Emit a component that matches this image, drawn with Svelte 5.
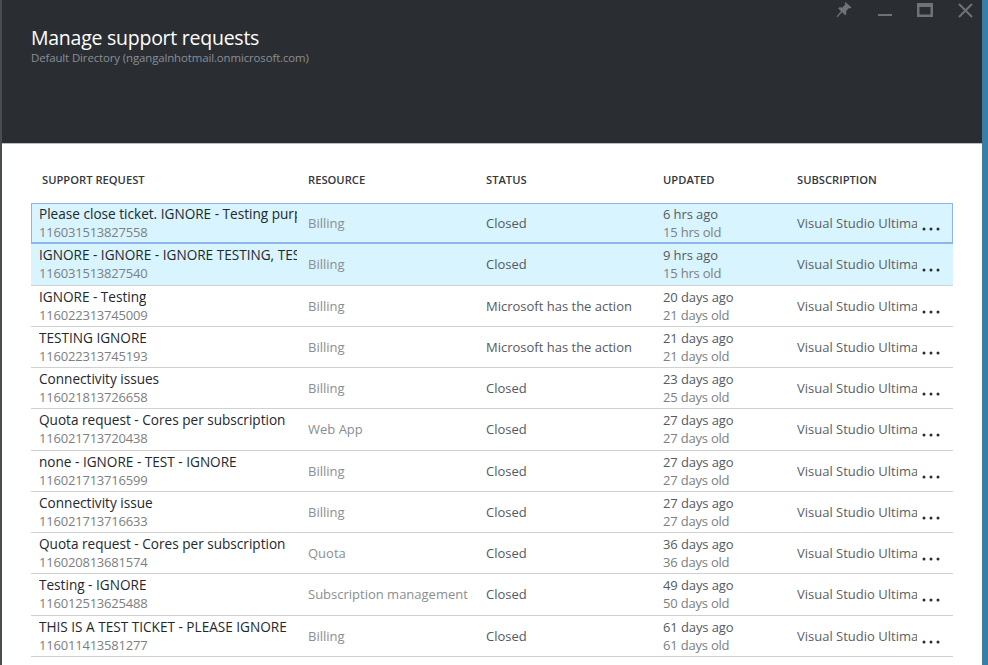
<script>
  const rows = [
    { title: 'Please close ticket. IGNORE - Testing purposes', id: '116031513827558', resource: 'Billing', status: 'Closed', updated: '6 hrs ago', age: '15 hrs old', state: 'focused' },
    { title: 'IGNORE - IGNORE - IGNORE TESTING, TESTING', id: '116031513827540', resource: 'Billing', status: 'Closed', updated: '9 hrs ago', age: '15 hrs old', state: 'selected' },
    { title: 'IGNORE - Testing', id: '116022313745009', resource: 'Billing', status: 'Microsoft has the action', updated: '20 days ago', age: '21 days old' },
    { title: 'TESTING IGNORE', id: '116022313745193', resource: 'Billing', status: 'Microsoft has the action', updated: '21 days ago', age: '21 days old' },
    { title: 'Connectivity issues', id: '116021813726658', resource: 'Billing', status: 'Closed', updated: '23 days ago', age: '25 days old' },
    { title: 'Quota request - Cores per subscription', id: '116021713720438', resource: 'Web App', status: 'Closed', updated: '27 days ago', age: '27 days old' },
    { title: 'none - IGNORE - TEST - IGNORE', id: '116021713716599', resource: 'Billing', status: 'Closed', updated: '27 days ago', age: '27 days old' },
    { title: 'Connectivity issue', id: '116021713716633', resource: 'Billing', status: 'Closed', updated: '27 days ago', age: '27 days old' },
    { title: 'Quota request - Cores per subscription', id: '116020813681574', resource: 'Quota', status: 'Closed', updated: '36 days ago', age: '36 days old' },
    { title: 'Testing - IGNORE', id: '116012513625488', resource: 'Subscription management', status: 'Closed', updated: '49 days ago', age: '50 days old' },
    { title: 'THIS IS A TEST TICKET - PLEASE IGNORE', id: '116011413581277', resource: 'Billing', status: 'Closed', updated: '61 days ago', age: '61 days old' }
  ];
</script>

<div class="blade">
  <header class="top">
    <div class="heading">
      <h1>Manage support requests</h1>
      <p>Default Directory (ngangalnhotmail.onmicrosoft.com)</p>
    </div>
    <div class="controls">
      <svg width="18" height="18" viewBox="0 0 18 18"><path d="M10.500 1l6 5.500-1.400.9-1-.5-3 3.200.3 3-1.300 1.200-3-3-4.600 5-1-.8 4.500-5.200-2.800-2.900 1.200-1.200 3 .2 3-3.200-.6-1.200z" fill="#6d7378"/></svg>
      <svg width="14" height="14" viewBox="0 0 14 14"><rect x="0" y="11" width="14" height="2" fill="#6d7378"/></svg>
      <svg width="16" height="14" viewBox="0 0 16 14"><path d="M0 0h16v14H0zM2.500 4v7.500h11V4z" fill="#6d7378" fill-rule="evenodd"/></svg>
      <svg width="15" height="15" viewBox="0 0 15 15"><path d="M1 1l13 13M14 1L1 14" stroke="#6d7378" stroke-width="2" fill="none"/></svg>
    </div>
  </header>

  <main class="content">
    <div class="row head">
      <span class="first">SUPPORT REQUEST</span>
      <span>RESOURCE</span>
      <span>STATUS</span>
      <span>UPDATED</span>
      <span>SUBSCRIPTION</span>
    </div>

    {#each rows as r}
      <div class="row item {r.state ?? ''}">
        <div class="cell two">
          <span class="title">{r.title}</span>
          <span class="sub">{r.id}</span>
        </div>
        <div class="cell muted">{r.resource}</div>
        <div class="cell status">{r.status}</div>
        <div class="cell two">
          <span class="upd">{r.updated}</span>
          <span class="sub">{r.age}</span>
        </div>
        <div class="cell plan">
          <span class="clip">Visual Studio Ultimate</span>
          <svg class="more" width="18" height="4" viewBox="0 0 18 4">
            <circle cx="2" cy="2" r="1.500" />
            <circle cx="9" cy="2" r="1.500" />
            <circle cx="16" cy="2" r="1.500" />
          </svg>
        </div>
      </div>
    {/each}
  </main>
</div>

<style>
  :global(body) {
    background: #fff;
    overflow: hidden;
  }

  .blade {
    width: 988px;
    height: 665px;
    box-sizing: border-box;
    border-left: 2px solid #4a4d50;
    border-right: 6px solid #3a7ea6;
    overflow: hidden;
    font-family: 'Open Sans', 'Noto Sans', sans-serif;
    background: #fff;
  }

  .top {
    height: 144px;
    background: #2a2e33;
    border-bottom: 1px solid #b9bbbd;
    box-sizing: border-box;
    display: flex;
    justify-content: space-between;
    align-items: flex-start;
    padding: 26px 9px 0 29px;
  }

  h1 {
    margin: 0;
    font-size: 19.5px;
    font-weight: 400;
    line-height: 24px;
    color: #fff;
    letter-spacing: -0.25px;
  }

  .heading p {
    margin: 1px 0 0;
    font-size: 11.4px;
    line-height: 14px;
    color: #8a8f93;
    letter-spacing: -0.1px;
  }

  .controls {
    display: flex;
    align-items: center;
    gap: 25px;
    margin-top: -25px;
  }

  .content {
    padding: 26px 27px 0 29px;
  }

  .row {
    display: grid;
    grid-template-columns: 277px 178px 177px 134px 1fr;
    width: 922px;
    box-sizing: border-box;
  }

  .head {
    height: 33px;
    font-size: 11.2px;
    font-weight: 600;
    color: #32383e;
    line-height: 18px;
  }

  .head .first {
    padding-left: 11px;
  }

  .head span {
    padding-top: 1px;
  }

  .item {
    height: 41.25px;
    border-bottom: 1px solid #cfd1d3;
    font-size: 13px;
    line-height: 18px;
  }

  .item.selected {
    background: #d8f4fe;
    border-bottom-color: #cfd3d6;
  }

  .item.focused {
    background: #d8f4fe;
    outline: 1px solid #8db4ef;
    outline-offset: -1px;
    border-bottom: 2px solid #8db4ef;
  }

  .cell {
    min-width: 0;
    display: flex;
    align-items: center;
    white-space: nowrap;
    overflow: hidden;
  }

  .two {
    flex-direction: column;
    align-items: flex-start;
    justify-content: center;
  }

  .two:first-child {
    padding-left: 8px;
    padding-right: 11px;
    box-sizing: border-box;
  }

  .title {
    color: #22282e;
    font-size: 13.6px;
    display: block;
    max-width: 100%;
    overflow: hidden;
  }

  .sub {
    color: #7c8084;
    letter-spacing: -0.2px;
  }

  .upd,
  .status {
    color: #555a5f;
  }

  .upd {
    letter-spacing: -0.1px;
  }

  .muted {
    color: #8a8e92;
  }

  .plan {
    color: #5b6065;
    gap: 5px;
  }

  .clip {
    width: 120px;
    flex: none;
    overflow: hidden;
  }

  .more {
    flex: none;
    margin-top: 12px;
    fill: #2a2e33;
  }
</style>
